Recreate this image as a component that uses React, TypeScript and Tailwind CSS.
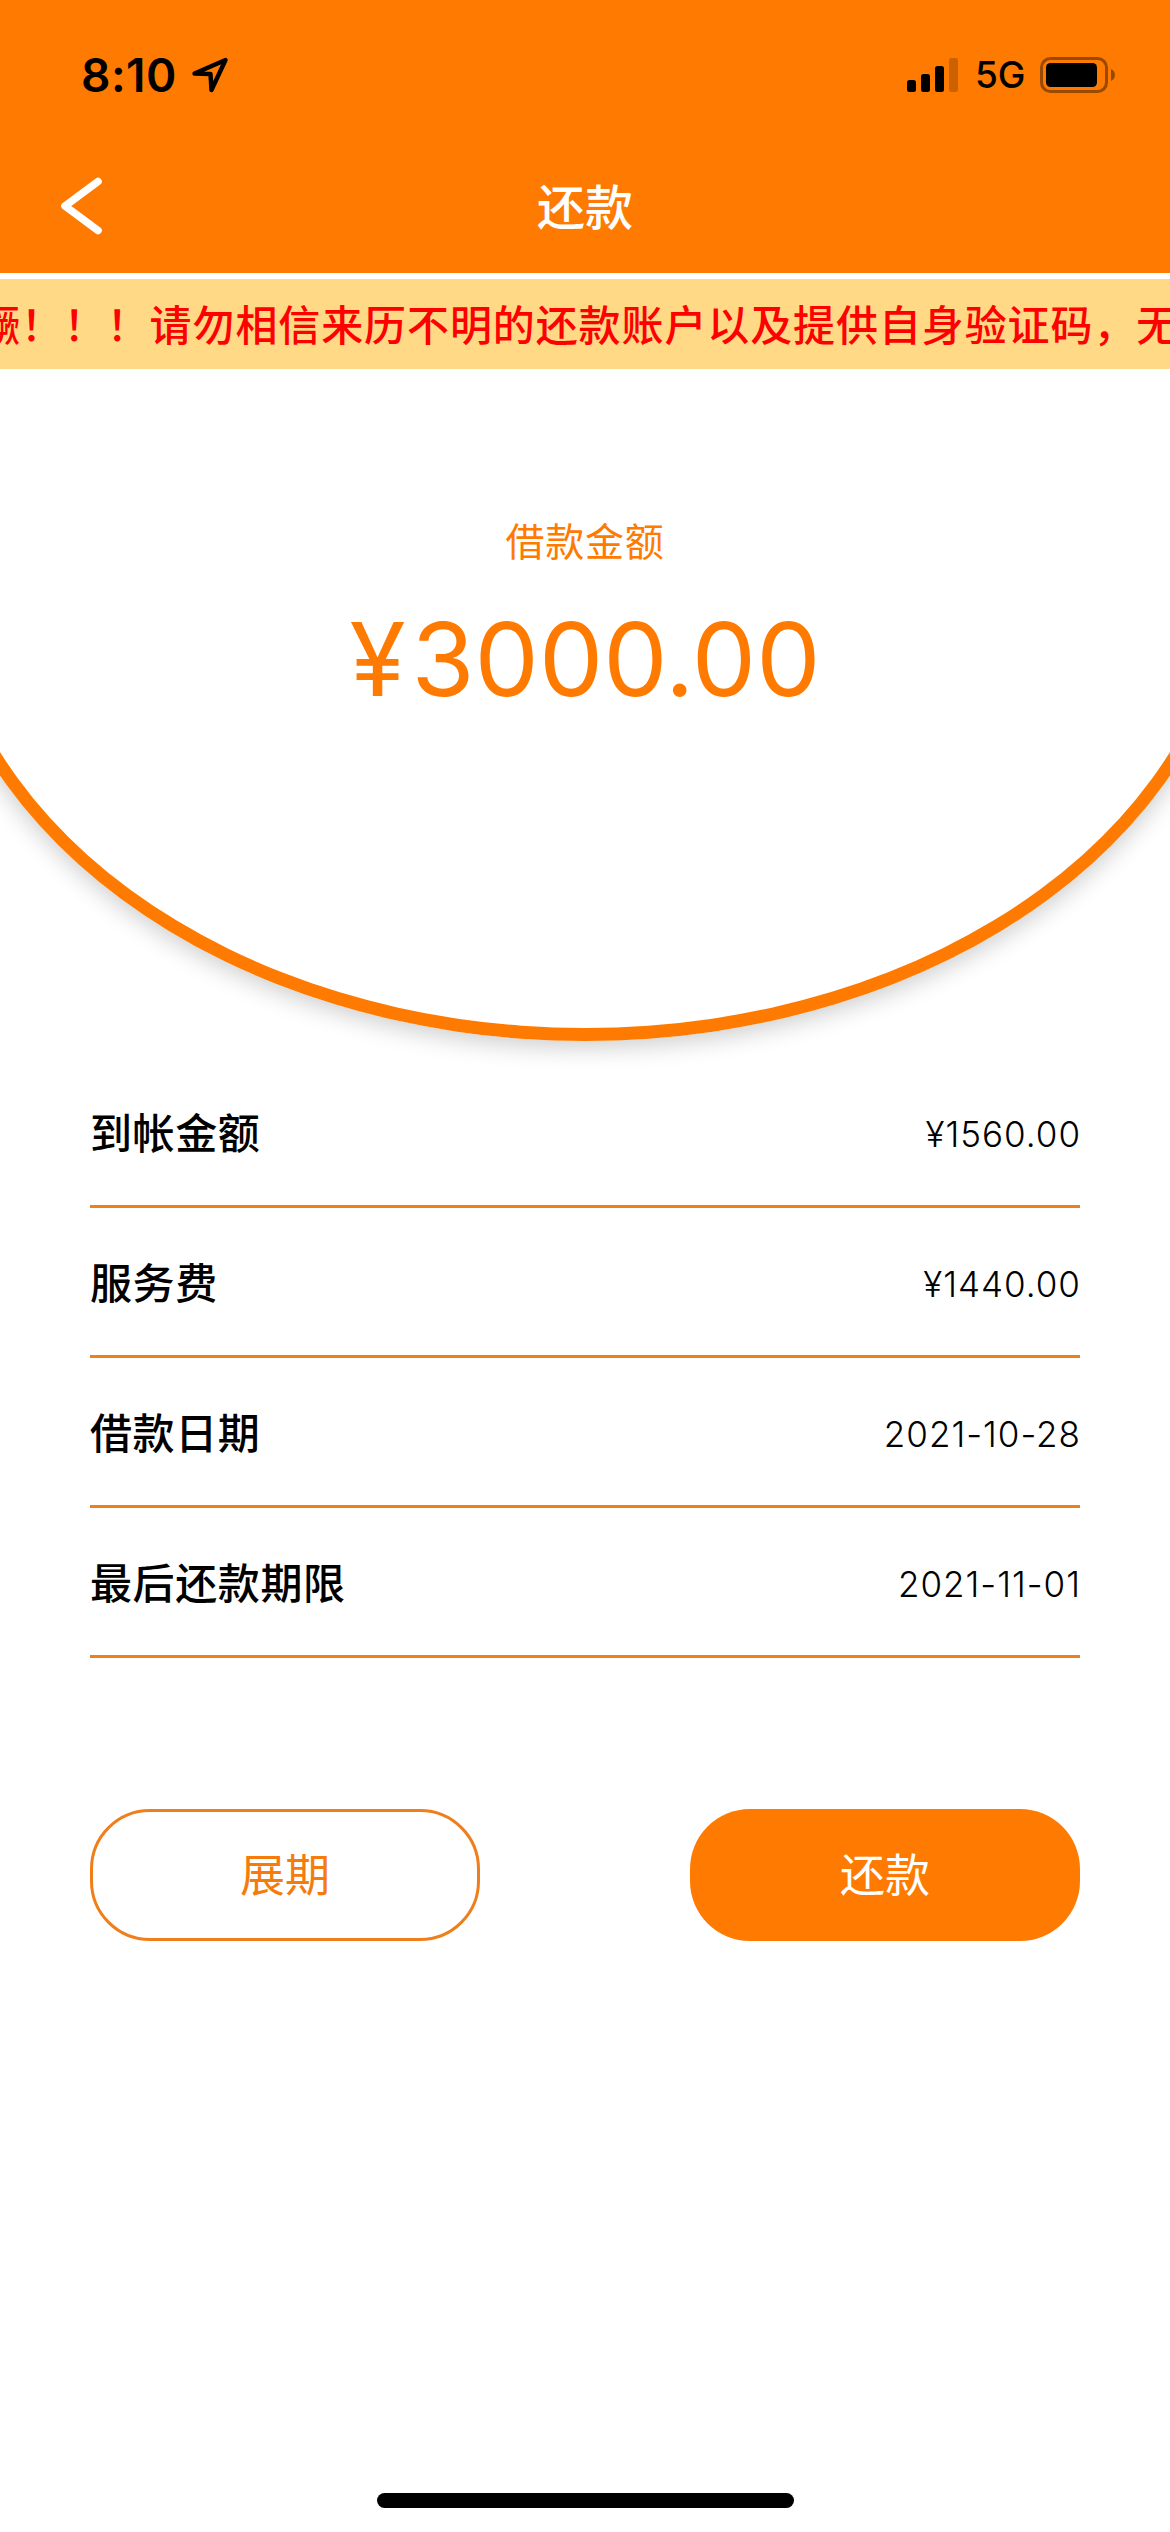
import React from 'react';

const details = [
    { label: '到帐金额', value: '¥1560.00' },
    { label: '服务费', value: '¥1440.00' },
    { label: '借款日期', value: '2021-10-28' },
    { label: '最后还款期限', value: '2021-11-01' },
];

const LocationArrow = () => (
    <svg className="ml-[14px] h-[38px] w-[38px]" viewBox="0 0 38 38" fill="none">
        <path d="M34.5 4 L3.5 17.5 L19.5 18 L20.5 34 Z" stroke="black" strokeWidth="4.4" strokeLinejoin="round" />
    </svg>
);

const Signal = () => (
    <svg className="h-[36px] w-[52px]" viewBox="0 0 52 36">
        <rect x="0" y="23" width="9" height="12" rx="2.5" />
        <rect x="14" y="17" width="9" height="18" rx="2.5" />
        <rect x="28" y="9" width="9" height="26" rx="2.5" />
        <rect x="42" y="1" width="9" height="34" rx="2.5" fillOpacity="0.2" />
    </svg>
);

const Battery = () => (
    <svg className="h-[36px] w-[76px]" viewBox="0 0 76 36">
        <rect x="1.5" y="1.5" width="65" height="33" rx="9" fill="none" stroke="black" strokeOpacity="0.4" strokeWidth="3" />
        <rect x="6" y="6" width="51" height="24" rx="4.5" />
        <path d="M71 12 C76.3 14 76.3 22 71 24 Z" fillOpacity="0.4" />
    </svg>
);

const StatusBar = () => (
    <div className="flex h-[142px] items-center pl-[81px] pr-[54px] pt-[7px]">
        <span className="font-[Inter] text-[46px] font-semibold leading-none tracking-[0.5px]">8:10</span>
        <LocationArrow />
        <div className="ml-auto flex items-center">
            <Signal />
            <span className="ml-[16px] w-[65px] font-[Inter] text-[37px] font-medium leading-none">5G</span>
            <Battery />
        </div>
    </div>
);

export default function App() {
    return (
        <div className="flex h-[2532px] w-[1170px] flex-col overflow-hidden bg-white font-['Inter','Noto_Sans_CJK_SC',sans-serif] text-black">
            <header className="relative z-10 h-[273px] shrink-0 bg-[#ff7a00]">
                <StatusBar />
                <div className="grid h-[131px] grid-cols-3 items-center px-[60px] pb-[4px]">
                    <svg className="h-[58px] w-[44px]" viewBox="0 0 44 58" fill="none">
                        <path d="M38 4.5 L5 29 L38 53.5" stroke="white" strokeWidth="7.6" strokeLinecap="round" strokeLinejoin="round" />
                    </svg>
                    <h1 className="pb-[3px] text-center font-['Noto_Sans_CJK_SC',sans-serif] text-[48px] font-medium leading-none text-white">还款</h1>
                </div>
            </header>

            <div className="relative z-10 border-t-[6px] border-white">
                <div className="flex h-[90px] items-center overflow-hidden bg-[#ffd985] pb-[3px]">
                    <p className="-ml-[22px] whitespace-nowrap font-['Noto_Sans_CJK_SC',sans-serif] text-[42px] font-medium leading-none tracking-[0.9px] text-[#ff0000]">
                        獗！！！请勿相信来历不明的还款账户以及提供自身验证码，无
                    </p>
                </div>
            </div>

            <section className="-mx-[71px] flex h-[672px] shrink-0 flex-col items-center rounded-b-[50%_485px] border-x-[13px] border-b-[13px] border-[#ff7a00] pt-[150px] text-[#ff7a00] shadow-[0_6px_24px_rgba(0,0,0,0.2)]">
                <p className="font-['Noto_Sans_CJK_SC',sans-serif] text-[39px] leading-[40px] tracking-[0.7px]">借款金额</p>
                <p className="mt-[50px] text-[102px] leading-[100px]">
                    <span className="mr-[6px]">¥</span>3000.00
                </p>
            </section>

            <section className="mx-[90px] mt-[17px]">
                {details.map((item) => (
                    <div key={item.label} className="flex h-[150px] items-center justify-between border-b-[3px] border-[#ee7f1b]">
                        <span className="pb-px font-['Noto_Sans_CJK_SC',sans-serif] text-[42px] font-medium leading-none tracking-[0.6px]">{item.label}</span>
                        <span className="-mr-px pt-[5px] text-[35px] font-light leading-none tracking-[1px]">{item.value}</span>
                    </div>
                ))}
            </section>

            <div className="mx-[90px] mt-[151px] flex justify-between font-['Noto_Sans_CJK_SC',sans-serif] text-[45px]">
                <button className="h-[132px] w-[390px] rounded-[60px] border-[3px] border-[#ee7f1b] pb-[5px] leading-none text-[#f57c0c]">展期</button>
                <button className="h-[132px] w-[390px] rounded-[60px] bg-[#ff7a00] pb-[5px] leading-none text-white">还款</button>
            </div>

            <div className="mx-auto mb-[24px] mt-auto h-[15px] w-[417px] rounded-full bg-black" />
        </div>
    );
}
